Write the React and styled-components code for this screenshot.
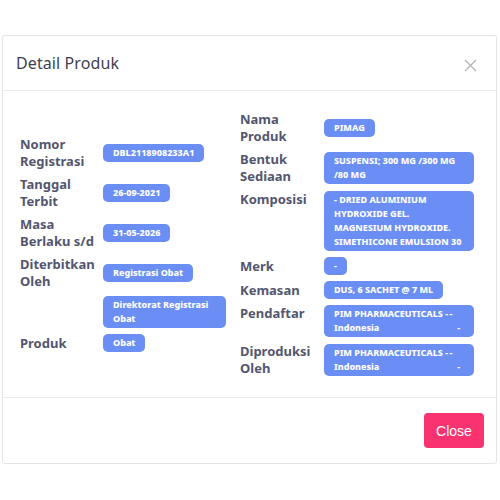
import React from 'react';
import styled, { createGlobalStyle } from 'styled-components';

const GlobalStyle = createGlobalStyle`
  * { box-sizing: border-box; }
  body {
    margin: 0;
    background: #ffffff;
    font-family: 'Noto Sans', sans-serif;
  }
`;

const leftRows = [
  { label: 'Nomor Registrasi', value: 'DBL2118908233A1' },
  { label: 'Tanggal Terbit', value: '26-09-2021' },
  { label: 'Masa Berlaku s/d', value: '31-05-2026' },
  { label: 'Diterbitkan Oleh', value: 'Registrasi Obat' },
  { label: '', value: 'Direktorat Registrasi Obat' },
  { label: 'Produk', value: 'Obat' },
];

const rightRows = [
  { label: 'Nama Produk', value: 'PIMAG' },
  { label: 'Bentuk Sediaan', value: 'SUSPENSI; 300 MG /300 MG /80 MG' },
  { label: 'Komposisi', value: '- DRIED ALUMINIUM HYDROXIDE GEL. MAGNESIUM HYDROXIDE. SIMETHICONE EMULSION 30', top: true },
  { label: 'Merk', value: '-' },
  { label: 'Kemasan', value: 'DUS, 6 SACHET @ 7 ML' },
  { label: 'Pendaftar', value: 'PIM PHARMACEUTICALS', dash: '--', after: 'Indonesia', trail: '-', top: true },
  { label: 'Diproduksi Oleh', value: 'PIM PHARMACEUTICALS', dash: '--', after: 'Indonesia', trail: '-' },
];

export default function App() {
  return (
    <Page>
      <GlobalStyle />
      <Modal>
        <Header>
          <Title>Detail Produk</Title>
          <CloseIcon aria-label="close">
            <svg width="13" height="13" viewBox="0 0 13 13">
              <path d="M1 1 L12 12 M12 1 L1 12" stroke="#b3b3b3" strokeWidth="1.3" fill="none" />
            </svg>
          </CloseIcon>
        </Header>
        <Body>
          <Column>
            {leftRows.map((row, i) => (
              <Row key={i} labelWidth={83} top={row.top}>
                <Label>{row.label}</Label>
                <Badge>{row.value}</Badge>
              </Row>
            ))}
          </Column>
          <Column>
            {rightRows.map((row, i) => (
              <Row key={i} labelWidth={84} top={row.top}>
                <Label>{row.label}</Label>
                <Badge>
                  {row.value}
                  {row.dash && <> <Dash>{row.dash}</Dash> {row.after}</>}
                  {row.trail && <Trail>{row.trail}</Trail>}
                </Badge>
              </Row>
            ))}
          </Column>
        </Body>
        <Footer>
          <CloseButton>Close</CloseButton>
        </Footer>
      </Modal>
    </Page>
  );
}

const Page = styled.div`
  width: 500px;
  height: 500px;
  padding: 35px 3px 0 2px;
`;

const Modal = styled.div`
  background: #ffffff;
  border: 1px solid #e4e4e4;
  border-radius: 3px;
  display: flex;
  flex-direction: column;
`;

const Header = styled.div`
  height: 55px;
  padding: 0 19px 0 13px;
  display: flex;
  align-items: center;
  justify-content: space-between;
  border-bottom: 1px solid #e9e9ee;
`;

const Title = styled.h5`
  margin: 0;
  font-family: 'Noto Sans', sans-serif;
  font-size: 16px;
  font-weight: 400;
  color: #3e3f4e;
  letter-spacing: 0.1px;
`;

const CloseIcon = styled.span`
  display: flex;
  margin-top: 4px;
`;

const Body = styled.div`
  padding: 20px 23px 20px 17px;
  display: grid;
  grid-template-columns: 206px 234px;
  column-gap: 14px;
  align-items: center;
`;

const Column = styled.div`
  display: flex;
  flex-direction: column;
  gap: 6px;
`;

const Row = styled.div`
  display: grid;
  grid-template-columns: ${(props) => props.labelWidth}px 1fr;
  align-items: ${(props) => (props.top ? 'start' : 'center')};
`;

const Label = styled.div`
  font-family: 'Noto Sans', sans-serif;
  font-size: 13px;
  font-weight: 700;
  line-height: 17px;
  color: #53566f;
`;

const Badge = styled.span`
  justify-self: start;
  display: inline-block;
  padding: 2px 10px;
  border-radius: 5px;
  background: #6a8ef4;
  color: #ffffff;
  font-family: 'Noto Sans', sans-serif;
  font-size: 9px;
  font-weight: 800;
  line-height: 14px;
`;

const Dash = styled.span`
  letter-spacing: 1.5px;
`;

const Trail = styled.span`
  float: right;
  margin-right: 4px;
`;

const Footer = styled.div`
  padding: 15px 12px 15px 0;
  display: flex;
  justify-content: flex-end;
  border-top: 1px solid #e9e9ee;
`;

const CloseButton = styled.button`
  width: 60px;
  height: 35px;
  border: none;
  border-radius: 4px;
  background: #f8336f;
  color: #ffffff;
  font-family: 'Liberation Sans', Arial, sans-serif;
  font-size: 14px;
  cursor: pointer;
`;
